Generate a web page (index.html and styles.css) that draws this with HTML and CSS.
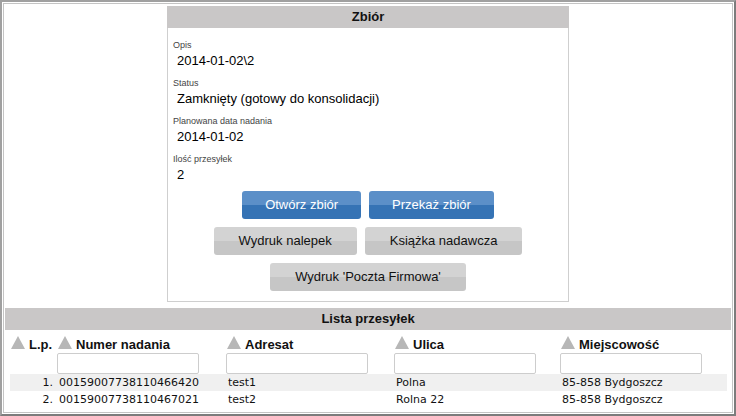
FILE: index.html
```html
<!DOCTYPE html>
<html lang="pl">
<head>
    <meta charset="UTF-8">
    <title>Zbiór</title>
    <link rel="stylesheet" href="styles.css">
</head>
<body>
<div class="frame">
    <div class="inner">

        <!-- Panel zbioru -->
        <div class="panel">
            <div class="panel-title">Zbiór</div>
            <div class="panel-body">
                <div class="field">
                    <div class="field-label">Opis</div>
                    <div class="field-value">2014-01-02\2</div>
                </div>
                <div class="field">
                    <div class="field-label">Status</div>
                    <div class="field-value">Zamknięty (gotowy do konsolidacji)</div>
                </div>
                <div class="field">
                    <div class="field-label">Planowana data nadania</div>
                    <div class="field-value">2014-01-02</div>
                </div>
                <div class="field">
                    <div class="field-label">Ilość przesyłek</div>
                    <div class="field-value">2</div>
                </div>

                <div class="btn-row">
                    <a href="#" class="btn btn-blue">Otwórz zbiór</a>
                    <a href="#" class="btn btn-blue">Przekaż zbiór</a>
                </div>
                <div class="btn-row">
                    <a href="#" class="btn btn-gray">Wydruk nalepek</a>
                    <a href="#" class="btn btn-gray">Książka nadawcza</a>
                </div>
                <div class="btn-row">
                    <a href="#" class="btn btn-gray">Wydruk 'Poczta Firmowa'</a>
                </div>
            </div>
        </div>

        <!-- Lista przesylek -->
        <div class="list-title">Lista przesyłek</div>
        <table class="list">
            <colgroup>
                <col class="c-lp">
                <col class="c-num">
                <col class="c-adr">
                <col class="c-ul">
                <col class="c-mie">
            </colgroup>
            <tr class="sort-row">
                <th><div class="sort-head"><svg class="tri" viewBox="0 0 14 13"><path d="M7 0 L14 13 L0 13 Z"/></svg><span>L.p.</span></div></th>
                <th><div class="sort-head"><svg class="tri" viewBox="0 0 14 13"><path d="M7 0 L14 13 L0 13 Z"/></svg><span>Numer nadania</span></div></th>
                <th><div class="sort-head"><svg class="tri" viewBox="0 0 14 13"><path d="M7 0 L14 13 L0 13 Z"/></svg><span>Adresat</span></div></th>
                <th><div class="sort-head"><svg class="tri" viewBox="0 0 14 13"><path d="M7 0 L14 13 L0 13 Z"/></svg><span>Ulica</span></div></th>
                <th><div class="sort-head"><svg class="tri" viewBox="0 0 14 13"><path d="M7 0 L14 13 L0 13 Z"/></svg><span>Miejscowość</span></div></th>
            </tr>
            <tr class="filter-row">
                <td></td>
                <td><input type="text" class="filter"></td>
                <td><input type="text" class="filter"></td>
                <td><input type="text" class="filter"></td>
                <td><input type="text" class="filter"></td>
            </tr>
            <tr class="data-row odd">
                <td class="lp">1.</td>
                <td>00159007738110466420</td>
                <td>test1</td>
                <td>Polna</td>
                <td>85-858 Bydgoszcz</td>
            </tr>
            <tr class="data-row">
                <td class="lp">2.</td>
                <td>00159007738110467021</td>
                <td>test2</td>
                <td>Rolna 22</td>
                <td>85-858 Bydgoszcz</td>
            </tr>
        </table>

    </div>
</div>
</body>
</html>
```

FILE: styles.css
```css
body {
    margin: 0;
    font-family: "Liberation Sans", Arial, sans-serif;
    color: #000;
    background: #fff;
}

/* Ramka okna */
.frame {
    width: 736px;
    height: 416px;
    box-sizing: border-box;
    border: 2px solid #a0a0a0;
    border-right-color: #7c7c7c;
    border-bottom-color: #7c7c7c;
    padding: 1px;
}

.inner {
    height: 100%;
    box-sizing: border-box;
    border: 1px solid #c4c4c4;
    padding-top: 2px;
}

/* Panel Zbior */
.panel {
    width: 402px;
    box-sizing: border-box;
    margin: 0 auto;
    border: 1px solid #cfcfcf;
    border-top: 0;
}

.panel-title {
    height: 22px;
    line-height: 22px;
    margin: 0 -1px;
    background-color: #c9c7c7;
    text-align: center;
    font-weight: bold;
    font-size: 13px;
    color: #111;
}

.panel-body {
    padding: 11px 5px 10px;
}

.field {
    margin-bottom: 8px;
}

.field-label {
    font-size: 9px;
    line-height: 13px;
    color: #444;
}

.field-value {
    font-size: 13px;
    line-height: 17px;
    padding-left: 4px;
}

/* Przyciski */
.btn-row {
    display: flex;
    justify-content: center;
    gap: 8px;
}

.btn-row + .btn-row {
    margin-top: 8px;
}

.btn {
    display: block;
    height: 28px;
    line-height: 28px;
    font-size: 13px;
    text-decoration: none;
    border-radius: 3px;
    text-align: center;
}

.btn-blue {
    padding: 0 23px;
    color: #fff;
    background: linear-gradient(#5b8fc8 0, #5b8fc8 50%, #3573b5 50%, #3573b5 100%);
}

.btn-gray {
    padding: 0 25px;
    color: #111;
    background: linear-gradient(#d3d3d3 0, #d3d3d3 50%, #c6c6c6 50%, #c6c6c6 100%);
}

/* Lista przesylek */
.list-title {
    margin: 6px 1px 0;
    height: 22px;
    line-height: 22px;
    background-color: #c9c7c7;
    text-align: center;
    font-weight: bold;
    font-size: 13px;
    color: #111;
}

.list {
    width: 717px;
    margin-left: 6px;
    border-collapse: collapse;
    table-layout: fixed;
}

.c-lp { width: 47px; }
.c-num { width: 169px; }
.c-adr { width: 168px; }
.c-ul { width: 166px; }
.c-mie { width: 167px; }

.list th, .list td {
    padding: 0;
    text-align: left;
    vertical-align: top;
}

.sort-row th {
    padding: 6px 0 0 1px;
}

.sort-head {
    display: flex;
    align-items: baseline;
    gap: 4px;
    line-height: 16px;
    font-size: 13px;
    font-weight: bold;
    color: #111;
}

.tri {
    width: 14px;
    height: 13px;
    fill: #b7b7b7;
    flex: none;
}

.filter {
    display: block;
    width: 142px;
    height: 21px;
    box-sizing: border-box;
    margin: 0;
    border: 1px solid #cdcdcd;
    border-radius: 2px;
    background: #fff;
}

.data-row td {
    font-family: "DejaVu Sans", Verdana, sans-serif;
    font-size: 11px;
    line-height: 17px;
    color: #111;
    padding-left: 2px;
    white-space: nowrap;
}

.data-row.odd td {
    background-color: #f0f0f0;
}

.data-row td.lp {
    text-align: right;
    padding: 0 4px 0 0;
}
```
